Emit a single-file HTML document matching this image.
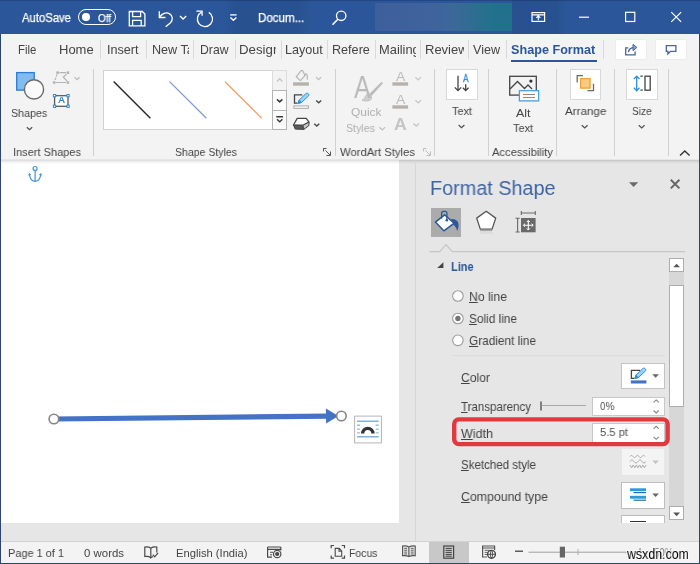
<!DOCTYPE html>
<html lang="en">
<head>
<meta charset="utf-8">
<title>Format Shape - Word</title>
<style>
html,body{margin:0;padding:0;}
body{width:700px;height:564px;position:relative;overflow:hidden;background:#e6e6e6;font-family:"Liberation Sans",sans-serif;}
.a{position:absolute;}
.t{will-change:transform;position:absolute;white-space:nowrap;line-height:1;transform-origin:0 50%;}
.t u{text-decoration:underline;text-underline-offset:.5px;}
svg{position:absolute;overflow:visible;}
.sep{position:absolute;width:1px;background:#d0d0d0;}
.tab{will-change:transform;position:absolute;top:42.4px;height:17px;overflow:hidden;white-space:nowrap;font-size:13px;line-height:16px;color:#444;}
.tab span{display:inline-block;transform-origin:0 50%;}
.tsep{position:absolute;top:40px;height:19px;width:1px;background:#dadada;}
.btn{position:absolute;background:#fff;border:1px solid #c6c6c6;box-sizing:border-box;}
</style>
</head>
<body>
<!-- title bar -->
<div class="a" style="left:0;top:0;width:700px;height:34.500px;background:#2b579a;"></div>
<div class="a" style="left:222px;top:0;width:90px;height:34.500px;background:linear-gradient(90deg,rgba(0,0,0,0),rgba(0,0,20,.07) 15%,rgba(0,0,20,.07) 85%,rgba(0,0,0,0));"></div>
<div class="a" style="left:512px;top:0;width:56px;height:34.500px;background:linear-gradient(90deg,rgba(0,0,20,.08),rgba(0,0,20,.07) 80%,rgba(0,0,0,0));"></div>
<div class="a" style="left:0;top:0;width:700px;height:1.200px;background:rgba(0,0,30,.18);"></div>
<div class="a" style="left:374.700px;top:2.600px;width:137.500px;height:28.800px;background:linear-gradient(90deg,#3d5f9c 0%,#3f639c 40%,#3c6899 58%,#2b6e90 75%,#22718c 86%,#22718c 100%);"></div>
<!-- tab row + ribbon -->
<div class="a" style="left:0;top:34.400px;width:700px;height:125.100px;background:#f3f3f3;"></div>

<!-- document area -->
<div class="a" style="left:0;top:159.500px;width:398.700px;height:363.900px;background:#fff;"></div>
<div class="a" style="left:0;top:159.500px;width:700px;height:4.500px;background:linear-gradient(rgba(0,0,0,.15),rgba(0,0,0,.05) 50%,rgba(0,0,0,0));"></div>
<!-- pane -->
<div class="a" style="left:415px;top:163px;width:1px;height:378px;background:#d6d6d6;"></div>
<!-- status bar -->
<div class="a" style="left:0;top:540.600px;width:700px;height:23.400px;background:#f3f3f3;border-top:1px solid #d2d2d2;box-sizing:border-box;"></div>
<div class="a" style="left:429.300px;top:541.600px;width:39.700px;height:21.200px;background:#c8c8c8;"></div>
<!-- window borders -->
<div class="a" style="left:0;top:34px;width:1.200px;height:530px;background:#2c4674;"></div>
<div class="a" style="left:698.800px;top:34px;width:1.200px;height:530px;background:#2c4674;"></div>
<div class="a" style="left:0;top:562.600px;width:700px;height:1.400px;background:#2c4674;"></div>
<!-- title bar icons -->
<div class="a" style="left:77.900px;top:8.800px;width:37.800px;height:16px;border:1.300px solid #fff;border-radius:9px;box-sizing:border-box;"></div>
<div class="a" style="left:82px;top:13px;width:7.600px;height:7.600px;border-radius:50%;background:#fff;"></div>
<svg style="left:0;top:0" width="700" height="34" viewBox="0 0 700 34" fill="none" stroke="#fff" stroke-width="1.3">
 <!-- save -->
 <path d="M129.3 11.5h13l2.6 2.6v11.8h-15.6z"/>
 <path d="M132.6 11.5v5.2h8v-5.2M132.6 25.9v-5.6h8.6v5.6"/>
 <!-- undo -->
 <path d="M159.3 11.3v6.2h6.2" />
 <path d="M159.6 17.2c2.3-3.6 6.4-5.4 9.7-3.6c3.6 2 3.9 6.4 1.2 9.2l-4.8 4"/>
 <path d="M180 16l3.1 3l3.1-3" stroke-width="1.4"/>
 <!-- redo -->
 <path d="M196.4 11.2h5.700v4.600"/>
 <path d="M208.800 12.400A7.600 7.600 0 1 1 201.700 12.100"/>
 <!-- qat -->
 <path d="M230.200 14.900h6.400" stroke-width="1.300"/>
 <path d="M230.400 17.600l3 2.700l3-2.700" stroke-width="1.400"/>
 <!-- search -->
 <circle cx="341.200" cy="15.800" r="4.700"/>
 <path d="M337.800 19.300l-5.300 5.400" stroke-width="1.600"/>
 <!-- ribbon display -->
 <rect x="532" y="12.600" width="12.600" height="8.800" stroke-width="1.200"/>
 <path d="M532 14.900h12.600M538.300 20.300v-4M536.300 17.900l2-2l2 2" stroke-width="1.100"/>
 <!-- min max close -->
 <path d="M579 17.200h10" stroke-width="1.200"/>
 <rect x="625.600" y="12.300" width="9.200" height="9.200" stroke-width="1.200"/>
 <path d="M671.300 12.100l9.800 9.800M681.100 12.100l-9.800 9.800" stroke-width="1.200"/>
</svg>
<!-- tab underline -->
<div class="a" style="left:511px;top:59.5px;width:86px;height:2.5px;background:#2b579a;"></div>
<!-- share / comments -->
<div class="btn" style="left:615.400px;top:38.500px;width:31.200px;height:21.800px;border-color:#ececec;border-radius:2px;"></div>
<div class="btn" style="left:655.400px;top:38.500px;width:31.200px;height:21.800px;border-color:#ececec;border-radius:2px;"></div>
<!-- ribbon separators -->
<div class="sep" style="left:93px;top:69px;height:87px;"></div>
<div class="sep" style="left:335px;top:69px;height:87px;"></div>
<div class="sep" style="left:434px;top:69px;height:87px;"></div>
<div class="sep" style="left:488px;top:69px;height:87px;"></div>
<div class="sep" style="left:556px;top:69px;height:87px;"></div>
<div class="sep" style="left:614px;top:69px;height:87px;"></div>
<div class="sep" style="left:668px;top:69px;height:87px;"></div>
<!-- gallery -->
<div class="btn" style="left:103px;top:70px;width:184px;height:60px;border-color:#d2d2d2;"></div>
<div class="a" style="left:272px;top:70px;width:15px;height:21px;background:#f3f3f3;border:1px solid #dcdcdc;box-sizing:border-box;"></div>
<div class="a" style="left:272px;top:90px;width:15px;height:21px;background:#fdfdfd;border:1px solid #b5b5b5;box-sizing:border-box;"></div>
<div class="a" style="left:272px;top:110px;width:15px;height:20px;background:#fdfdfd;border:1px solid #b5b5b5;box-sizing:border-box;"></div>
<!-- big buttons -->
<div class="btn" style="left:446px;top:69px;width:32px;height:30.5px;border-color:#d8d8d8;"></div>
<div class="btn" style="left:570px;top:69px;width:30.5px;height:30.5px;border-color:#d8d8d8;"></div>
<div class="btn" style="left:626px;top:69px;width:32px;height:30.5px;border-color:#d8d8d8;"></div>
<!-- ribbon icons -->
<svg style="left:0;top:0" width="700" height="162" viewBox="0 0 700 162" fill="none" stroke-linecap="butt">
 <!-- shapes -->
 <rect x="16.700" y="72.600" width="17.500" height="17.500" fill="#83bbee" stroke="#2b7cd3" stroke-width="1.300"/>
 <circle cx="34" cy="89.400" r="9.600" fill="#fafafa" stroke="#6a6a6a" stroke-width="1.400"/>
 <path d="M26.800 127.200l2.700 2.500l2.700-2.500" stroke="#505050" stroke-width="1.250"/>
 <!-- edit shape (disabled) -->
 <g stroke="#b4b4b4" stroke-width="1.200">
  <path d="M59.500 72.700h6.500M56 82.500h10"/>
  <path d="M57 74.500l-2.300 6.500" stroke-dasharray="2.200 1.300"/>
  <path d="M66.500 74.300l-3.200 2.700l3.600 4"/>
  <g fill="#b4b4b4" stroke="none"><rect x="56.300" y="71.400" width="2.600" height="2.600"/><rect x="66.600" y="71.400" width="2.600" height="2.600"/><rect x="52.900" y="81.200" width="2.600" height="2.600"/><rect x="66.600" y="81.200" width="2.600" height="2.600"/></g>
  <path d="M74.600 77.300l2.500 2.400l2.500-2.400" stroke="#bcbcbc" stroke-width="1.300"/>
 </g>
 <!-- text box icon -->
 <rect x="54.600" y="95.700" width="13.400" height="10.600" fill="#fff" stroke="#5a5a5a" stroke-width="1.300"/>
 <g fill="#fff" stroke="#2a8dd4" stroke-width="1"><rect x="53.400" y="94.500" width="2.300" height="2.300"/><rect x="66.900" y="94.500" width="2.300" height="2.300"/><rect x="53.400" y="105.100" width="2.300" height="2.300"/><rect x="66.900" y="105.100" width="2.300" height="2.300"/></g>
 <!-- gallery lines -->
 <path d="M113.600 81.600l36.800 36.700" stroke="#262626" stroke-width="1.400"/>
 <path d="M169.600 81.600l36.800 36.700" stroke="#7f9ad6" stroke-width="1.300"/>
 <path d="M225 81.700l36.800 36.600" stroke="#eda36d" stroke-width="1.300"/>
 <!-- gallery chevrons -->
 <path d="M277 81.400l2.700-2.600l2.700 2.600" stroke="#c6c6c6" stroke-width="1.400"/>
 <path d="M277 99.400l2.700 2.500l2.700-2.500" stroke="#3a3a3a" stroke-width="1.500"/>
 <path d="M276.300 116.700h6.800M277 119.200l2.700 2.500l2.700-2.500" stroke="#3a3a3a" stroke-width="1.400"/>
 <!-- shape fill (disabled) -->
 <g stroke="#b6b6b6" stroke-width="1.200" stroke-linejoin="round">
  <path d="M301 70.600l-4.800 6.200l4.200 3.800l4.600-5l-2.400-5z"/>
  <path d="M304.400 76c.4-2.600 2.400-3 2.800-.6l.2 4.200"/>
 </g>
 <rect x="293.100" y="82.300" width="15.800" height="3.400" fill="#b5b1ad"/>
 <path d="M316.100 77.300l2.500 2.300l2.500-2.300" stroke="#c2c2c2" stroke-width="1.300"/>
 <!-- shape outline -->
 <path d="M302.400 94.800h-7.900v8.300h3" stroke="#444" stroke-width="1.300"/>
 <path d="M298 103.500l1.200-3.500l6.600-6.300c.8-.7 1.800-.7 2.500 0c.7 .7 .7 1.700 0 2.500l-6.700 6.200z" fill="#9ad4f6" stroke="#2f8fda" stroke-width="1"/>
 <path d="M298 103.500l1.200-3.500l2.400 2.400z" fill="#2f8fda" stroke="#2f8fda" stroke-width=".8"/>
 <rect x="293.900" y="105.900" width="14.500" height="2.400" fill="#fff" stroke="#a8a8a8" stroke-width="1"/>
 <path d="M316.200 100.400l2.500 2.400l2.500-2.400" stroke="#4a4a4a" stroke-width="1.400"/>
 <!-- shape effects -->
 <path d="M293.500 125l3.700-6.600h9l2.800 3.700l-6.100 3.200z" fill="#fdfdfd" stroke="#444" stroke-width="1.200" stroke-linejoin="round"/>
 <path d="M293.500 125l9.400 .300l.900 4.100l-8.600-.300z" fill="#5a5a5a" stroke="#444" stroke-width="1" stroke-linejoin="round"/>
 <path d="M302.900 125.300l6.100-3.200l-.100 3.500l-5.100 3.800z" fill="#c4c4c4" stroke="#444" stroke-width="1" stroke-linejoin="round"/>
 <path d="M314.300 123.700l2.500 2.400l2.500-2.400" stroke="#4a4a4a" stroke-width="1.400"/>
 <!-- dialog launchers -->
 <path d="M324 149v-1h0M323.500 148.500h3M323.500 148.500v3M325.500 150.500l4.500 4.500M330.500 151.500v4h-4" stroke="#555" stroke-width="1"/>
 <path d="M423.500 148.500h3M423.500 148.500v3M425.500 150.500l4.500 4.500M430.500 151.500v4h-4" stroke="#bdbdbd" stroke-width="1"/>
 <!-- quick styles -->
 <path d="M382.300 82.300c.6 .5 .4 1.300-.2 2l-10.600 11.700l-2.300-2.100l11.400-11.200c.6-.6 1.200-.8 1.700-.4z" fill="#bcbcbc"/>
 <path d="M369 94.300l2.300 2.100c.8 1.800-.2 3.500-2 4.100c-2.500 .9-5.300 .5-7.300-.3c2-.8 2.600-2.200 3.300-3.700c.8-1.700 2.300-2.600 3.700-2.200z" fill="#cfcfcf" stroke="#b8b8b8" stroke-width=".8"/>
 <path d="M379.400 127.300l2.800 2.600l2.800-2.600" stroke="#c0c0c0" stroke-width="1.300"/>
 <!-- wordart small bars & chevrons -->
 <rect x="392.400" y="82.300" width="15.700" height="3.400" fill="#b5b1ad"/>
 <rect x="392.400" y="105.300" width="15.700" height="3.400" fill="#b5b1ad"/>
 <path d="M415.400 77.300l2.800 2.600l2.800-2.600M415.400 100.300l2.800 2.600l2.800-2.600M413.400 123.500l2.800 2.600l2.800-2.600" stroke="#c6c6c6" stroke-width="1.300"/>
 <!-- text direction -->
 <path d="M458 75.700v14.500M454.800 87.400l3.200 3.200l3.200-3.200" stroke="#444" stroke-width="1.300"/>
 <path d="M465.700 84.200v6M462.900 87.800l2.800 2.800l2.800-2.800" stroke="#444" stroke-width="1.300"/>
 <path d="M458.600 125l2.900 2.700l2.900-2.700" stroke="#505050" stroke-width="1.250"/>
 <!-- alt text -->
 <rect x="509.700" y="76.300" width="26.600" height="18.800" stroke="#444" stroke-width="1.300"/>
 <path d="M510 89l7.500-7.500l7 7l3.500-3.500l4 4" stroke="#444" stroke-width="1.300"/>
 <circle cx="530.900" cy="81.100" r="1.600" fill="#333"/>
 <rect x="519.400" y="90.700" width="19.200" height="10.200" fill="#fff" stroke="#4a9fe0" stroke-width="1.300"/>
 <path d="M523 94.500h12M523 97.500h12" stroke="#8a8a8a" stroke-width="1.100"/>
 <!-- arrange -->
 <path d="M583 75.700h-5.800v6.800M587.500 90.700h6v-7" stroke="#6a6a6a" stroke-width="1.300"/>
 <rect x="580.600" y="78.600" width="9.500" height="9.500" fill="#f9cb80" stroke="#e8a33a" stroke-width="1.300"/>
 <path d="M581.800 125.200l2.900 2.700l2.900-2.700" stroke="#505050" stroke-width="1.250"/>
 <!-- size -->
 <path d="M636.700 76.500v13.800M633.900 79l2.800-2.900l2.800 2.900M633.900 87.800l2.800 2.900l2.800-2.900" stroke="#2f8fda" stroke-width="1.300"/>
 <rect x="645" y="76.200" width="5.200" height="14" stroke="#444" stroke-width="1.300"/>
 <path d="M640.400 76.200h2.400M640.400 90.200h2.400" stroke="#444" stroke-width="1.200"/>
 <path d="M638.800 125.200l2.900 2.700l2.900-2.700" stroke="#505050" stroke-width="1.250"/>
 <!-- collapse ribbon -->
 <path d="M680 155.500l4.800-4.600l4.800 4.600" stroke="#333" stroke-width="1.400"/>
 <!-- share -->
 <path d="M628.300 47.800h-2.600v7h9.400v-3.200" stroke="#4a6599" stroke-width="1.300"/>
 <path d="M628.400 52.200c.4-3 2.600-4.600 6-4.700" stroke="#4a6599" stroke-width="1.300"/>
 <path d="M633 44.300l3.900 3.200l-3.900 3.200z" fill="#8ea3cc" stroke="#4a6599" stroke-width="1"/>
 <!-- comment -->
 <path d="M666.300 45.700h9.600v5.600h-5.400l-2.600 2.700v-2.700h-1.600z" stroke="#4a6599" stroke-width="1.300"/>
</svg>
<!-- pane: icon tabs -->
<div class="a" style="left:431.300px;top:207.700px;width:29.700px;height:29.200px;background:#ababab;"></div>
<svg style="left:0;top:162px" width="700" height="380" viewBox="0 162 700 380" fill="none">
 <!-- pane title controls -->
 <path d="M629 182.300h9.200l-4.600 4.800z" fill="#6a6a6a"/>
 <path d="M670.800 179.800l8.600 8.600M679.400 179.800l-8.600 8.600" stroke="#666" stroke-width="2"/>
 <!-- bucket -->
 <path d="M444.600 214.800l9.400 8.500l-10.200 7.500l-8.400-8.700z" fill="#fff" stroke="#2b579a" stroke-width="1.500" stroke-linejoin="round"/>
 <path d="M441.600 218.500v-5.300c0-1.200 .8-1.900 1.900-1.900h1.500c1.100 0 1.900 .7 1.900 1.900v7" stroke="#2b579a" stroke-width="1.300"/>
 <circle cx="446.800" cy="220.300" r="1.300" fill="#2b579a"/>
 <path d="M451 219.200c3.500-.5 6.800 1.200 7.400 4.200c.5 2.500 -.2 5.500-1.200 7.500c-.6-2.500-1.800-4.800-3.800-6.200l.6-1.600z" fill="#2b579a"/>
 <!-- pentagon -->
 <path d="M486.200 211.300l9.500 6.800l-3.600 11h-11.800l-3.600-11z" fill="#fff" stroke="#555" stroke-width="1.300" stroke-linejoin="round"/>
 <path d="M480.300 230.500h11.800l1 3.500h-13.800z" fill="#dcdcdc"/>
 <path d="M480 230.200h12.400" stroke="#9a9a9a" stroke-width="1.200"/>
 <!-- size & properties -->
 <rect x="521" y="218" width="14.600" height="14.300" fill="#6a6a6a"/>
 <path d="M521 213h14.600M521.300 211v4M535.300 211v4M517.600 218v14.300M515.500 218.300h4.200M515.500 232h4.200" stroke="#6a6a6a" stroke-width="1.100"/>
 <path d="M523.500 225.200h9.600M528.300 220.400v9.600" stroke="#fff" stroke-width="1.100"/>
 <path d="M525 223.700l-1.600 1.500l1.600 1.500M531.600 223.700l1.600 1.500l-1.600 1.500M526.800 222l1.500-1.600l1.500 1.600M526.800 228.400l1.500 1.600l1.500-1.600" stroke="#fff" stroke-width="1"/>
 <!-- separator with notch -->
 <path d="M429.300 251.600h10.400l6.300-7l6.300 7h232.700" stroke="#c6c6c6" stroke-width="1.300"/>
 <!-- section triangle -->
 <path d="M443.400 262.200v5.900h-6.200z" fill="#444"/>
 <!-- radios -->
 <circle cx="457.900" cy="296" r="5.300" fill="#fff" stroke="#9c9c9c" stroke-width="1.100"/>
 <circle cx="457.900" cy="318.500" r="5.300" fill="#fff" stroke="#9c9c9c" stroke-width="1.100"/>
 <circle cx="457.900" cy="318.500" r="2.700" fill="#767676"/>
 <circle cx="457.900" cy="340.300" r="5.300" fill="#fff" stroke="#9c9c9c" stroke-width="1.100"/>
 <!-- faint sub separator -->
 <path d="M452 355.600h213" stroke="#dbdbdb" stroke-width="1"/>
 <!-- transparency slider -->
 <path d="M541 401.500v9" stroke="#666" stroke-width="1.600"/>
 <path d="M541.800 405.500h44.200" stroke="#a8a8a8" stroke-width="1"/>
</svg>
<!-- colour button -->
<div class="btn" style="left:621.400px;top:363px;width:43.200px;height:26.400px;border-color:#c3c3c3;"></div>
<!-- fields -->
<div class="btn" style="left:592px;top:396.500px;width:72.600px;height:19.400px;border-color:#c8c8c8;"></div>
<div class="btn" style="left:592px;top:423px;width:72.600px;height:20px;border-color:#c8c8c8;"></div>
<!-- sketched (disabled) -->
<div class="a" style="left:621.500px;top:449px;width:42.800px;height:26px;background:#f4f4f4;"></div>
<!-- compound -->
<div class="btn" style="left:621.400px;top:482.300px;width:43.200px;height:26.400px;border-color:#bdbdbd;"></div>
<!-- dash type (clipped) -->
<div class="a" style="left:621.400px;top:515px;width:43.200px;height:8px;overflow:hidden;"><div class="btn" style="left:0;top:0;width:43.200px;height:26px;border-color:#bdbdbd;"></div><div class="a" style="left:8.600px;top:5.800px;width:16px;height:1.500px;background:#333;"></div></div>
<!-- pane scrollbar -->
<div class="a" style="left:669.300px;top:258px;width:14.400px;height:262px;background:#d7d7d7;"></div>
<div class="btn" style="left:669.200px;top:258.200px;width:14.600px;height:14.300px;border-color:#adadad;"></div>
<div class="btn" style="left:669.200px;top:285px;width:14.600px;height:121.500px;border-color:#adadad;"></div>
<div class="btn" style="left:669.200px;top:506.200px;width:14.600px;height:14.200px;border-color:#adadad;"></div>
<svg style="left:0;top:162px" width="700" height="380" viewBox="0 162 700 380" fill="none">
 <path d="M673.200 267.300h6.800l-3.400-3.600z" fill="#555"/>
 <path d="M673.200 512.600h6.800l-3.400 3.600z" fill="#555"/>
 <!-- colour icon -->
 <path d="M640 370.300h-8.600v8h3" stroke="#444" stroke-width="1.300"/>
 <path d="M634.800 378.600l1.200-3.500l6.700-6.400c.8-.7 1.800-.7 2.500 0c.7 .7 .7 1.700 0 2.500l-6.800 6.300z" fill="#9ad4f6" stroke="#2f8fda" stroke-width="1"/>
 <path d="M634.800 378.600l1.200-3.500l2.400 2.400z" fill="#2f8fda" stroke="#2f8fda" stroke-width=".8"/>
 <rect x="630.800" y="380.400" width="15.600" height="3.100" fill="#4472c4"/>
 <path d="M652.300 374.200h6.600l-3.300 3.600z" fill="#666"/>
 <!-- spinners -->
 <path d="M653.600 402.400l2.600-2.500l2.600 2.500M653.600 410.500l2.600 2.500l2.600-2.500M653.600 428.800l2.600-2.500l2.600 2.500M653.600 436.800l2.600 2.500l2.600-2.500" stroke="#858585" stroke-width="1.100"/>
 <!-- sketched icon -->
 <path d="M630 456.500c1-1.500 2-1.500 3 0s2 1.500 3 0s2-1.500 3 0s2 1.500 3 0s2-1.500 3 0M630 461.500c1.300-2 2.700-2 4 0s2.700 2 4 0s2.700-2 4 0s2.700 2 4 0M630 465l1.600 2.800l1.600-2.800l1.600 2.800l1.600-2.800l1.600 2.800l1.600-2.800l1.600 2.800l1.600-2.800l1.600 2.800l1.600-2.800" stroke="#ababab" stroke-width="1"/>
 <path d="M652.300 460.500h6.600l-3.300 3.600z" fill="#c4c4c4"/>
 <!-- compound icon -->
 <rect x="630" y="488.300" width="16" height="2.900" fill="#2e9ad9"/>
 <rect x="633.500" y="492" width="12.500" height="1.200" fill="#1f6fa8"/>
 <rect x="630" y="495.800" width="16" height="2.900" fill="#2e9ad9"/>
 <rect x="633.500" y="499.600" width="12.500" height="1.200" fill="#1f6fa8"/>
 <path d="M652.300 493.500h6.600l-3.300 3.600z" fill="#666"/>
 <!-- red highlight -->
 <rect x="454.200" y="419.400" width="213.400" height="24.700" rx="4.600" stroke="#e2393e" stroke-width="4.400"/>
</svg>
<!-- document objects -->
<svg style="left:0;top:162px" width="415" height="380" viewBox="0 162 415 380" fill="none">
 <!-- anchor -->
 <g stroke="#3f93d2" stroke-width="1.200">
  <circle cx="35.100" cy="168.500" r="2"/>
  <path d="M35.100 170.600v10.700"/>
  <path d="M29.500 174c.2 4.200 2.400 7 5.600 7.300c3.200-.3 5.400-3.100 5.600-7.300"/>
  <path d="M28.500 175.400l1-1.900l1.500 1.500M39.200 175l1.500-1.500l1 1.900" stroke-width=".9"/>
 </g>
 <!-- arrow line -->
 <path d="M54 419L328 416.140" stroke="#4472c4" stroke-width="5.200"/>
 <path d="M325.900 408.600l12.600 7.400l-12.400 7.400z" fill="#4472c4"/>
 <circle cx="53.900" cy="419" r="4.800" fill="#fff" stroke="#858585" stroke-width="1.600"/>
 <circle cx="341.400" cy="416" r="4.800" fill="#fff" stroke="#858585" stroke-width="1.600"/>
 <!-- layout options -->
 <rect x="354.600" y="416.100" width="26.800" height="26.800" fill="#fff" stroke="#b9b2b2" stroke-width="1"/>
 <path d="M357 421.200h21.700M357 436.700h21.700" stroke="#7fb4e0" stroke-width="1.500"/>
 <path d="M357 425.300h3M375.700 425.300h3M357 429.100h3M375.700 429.100h3M357 432.900h3M375.700 432.900h3" stroke="#8dbde4" stroke-width="1.400"/>
 <path d="M362.600 433.600a5.200 5.200 0 0 1 10.400 0" stroke="#333" stroke-width="3.400"/>
</svg>
<!-- status bar icons -->
<svg style="left:0;top:541px" width="700" height="23" viewBox="0 541 700 23" fill="none" stroke="#4a4a4a" stroke-width="1.200">
 <!-- proofing book -->
 <path d="M150.800 548.300c-1.600-1.300-4-1.500-6-1.200v9.400c2-.3 4.400-.1 6 1.200"/>
 <path d="M150.800 548.300c1.600-1.300 4-1.500 6-1.200v5.500M150.800 548.300v9.400c.8-.6 1.400-.9 2.200-1.100"/>
 <path d="M152.800 554.600l1.900 2.200l3.400-4"/>
 <!-- macro -->
 <path d="M267.600 547h13.200M267.600 549.400h13.200M267.600 547v10.200h4.400M280.800 547v3.500" />
 <path d="M270 552.300h3M270 554.800h2.200" stroke-width="1"/>
 <circle cx="277.200" cy="554" r="3.700"/>
 <circle cx="277.200" cy="554" r="1.500" fill="#4a4a4a"/>
 <!-- focus -->
 <path d="M331.200 548.200v-2.700h2.800M341.700 545.500h2.800v2.700M344.500 555.500v2.700h-2.800M334 558.200h-2.800v-2.700"/>
 <path d="M335.200 548.400h4l2.500 2.500v5.400h-6.500zM339 548.600v2.600h2.600" stroke-width="1.100"/>
 <!-- read mode -->
 <g stroke="#555" stroke-width="1.200">
 <path d="M408.900 547c-1.800-1-4.200-1.200-6.300-.9v9.600c2.100-.3 4.500-.1 6.300 .9c1.800-1 4.200-1.200 6.300-.9v-9.600c-2.100-.3-4.500-.1-6.300 .9zM408.900 547v9.600"/>
 <path d="M404.200 548.300h3M404.200 550.200h3M404.200 552.100h3M404.200 554h3M410.700 548.300h3M410.700 550.200h3M410.700 552.100h3M410.700 554h3" stroke-width="1"/>
 </g>
 <!-- print layout -->
 <rect x="443.800" y="546" width="9.800" height="12.200" stroke="#444" stroke-width="1.200"/>
 <path d="M445.600 548.400h6.200M445.600 550.400h6.200M445.600 552.400h6.200M445.600 554.400h6.200M445.600 556.200h6.200" stroke="#444" stroke-width="1"/>
 <!-- web layout -->
 <path d="M487 557h-4.400v-11h12v4" stroke="#555"/>
 <path d="M482.600 548h12" stroke="#555" stroke-width="1"/>
 <path d="M484.600 550.300h5M484.600 552.400h3M484.600 554.500h2.500" stroke="#666" stroke-width="1"/>
 <circle cx="491.500" cy="554.300" r="3.900" fill="#f3f3f3" stroke="#444" stroke-width="1.400"/>
 <path d="M487.600 554.300h7.800M491.500 550.400c-1.500 1.200-1.500 6.600 0 7.800c1.500-1.200 1.500-6.600 0-7.800" stroke="#444" stroke-width=".9"/>
 <!-- zoom slider -->
 <path d="M515 551.200h8" stroke="#444" stroke-width="1.300"/>
 <path d="M528.500 552.200h104" stroke="#a0a0a0" stroke-width="1"/>
 <path d="M578 549v6.200" stroke="#b0b0b0" stroke-width="1"/>
 <rect x="559.800" y="546.700" width="5.200" height="10.800" fill="#666" stroke="none"/>
 <path d="M636 552.200h8M640 548.200v8" stroke="#777" stroke-width="1.200"/>
</svg>

<span class="t" style="left:22.0px;top:11.5px;font-size:12px;color:#fff;transform:scaleX(0.941);-webkit-text-stroke:.25px #fff;">AutoSave</span>
<span class="t" style="left:97.5px;top:12.6px;font-size:10.5px;color:#fff;transform:scaleX(0.948);-webkit-text-stroke:.25px #fff;">Off</span>
<span class="t" style="left:258.0px;top:12.4px;font-size:12px;color:#fff;transform:scaleX(0.964);-webkit-text-stroke:.25px #fff;">Docum...</span>
<span class="t" style="left:11.1px;top:107.6px;font-size:11.8px;color:#444;transform:scaleX(0.907);">Shapes</span>
<span class="t" style="left:13.0px;top:146.9px;font-size:11.8px;color:#444;transform:scaleX(0.934);">Insert Shapes</span>
<span class="t" style="left:175.0px;top:146.9px;font-size:11.8px;color:#444;transform:scaleX(0.892);">Shape Styles</span>
<span class="t" style="left:340.0px;top:146.9px;font-size:11.8px;color:#444;transform:scaleX(0.956);">WordArt Styles</span>
<span class="t" style="left:492.0px;top:146.9px;font-size:11.8px;color:#444;transform:scaleX(0.949);">Accessibility</span>
<span class="t" style="left:351.3px;top:107.4px;font-size:11.8px;color:#b0b0b0;transform:scaleX(1.011);">Quick</span>
<span class="t" style="left:346.4px;top:123.1px;font-size:11.8px;color:#b0b0b0;transform:scaleX(0.900);">Styles</span>
<span class="t" style="left:451.7px;top:105.9px;font-size:11.8px;color:#444;transform:scaleX(0.924);">Text</span>
<span class="t" style="left:515.5px;top:107.8px;font-size:11.8px;color:#444;transform:scaleX(1.052);">Alt</span>
<span class="t" style="left:512.5px;top:123.4px;font-size:11.8px;color:#444;transform:scaleX(0.929);">Text</span>
<span class="t" style="left:565.0px;top:105.9px;font-size:11.8px;color:#444;transform:scaleX(0.986);">Arrange</span>
<span class="t" style="left:632.4px;top:105.9px;font-size:11.8px;color:#444;transform:scaleX(0.854);">Size</span>
<span class="t" style="left:430.4px;top:178.1px;font-size:20px;color:#3e64a3;transform:scaleX(0.991);">Format Shape</span>
<span class="t" style="left:451.4px;top:260.6px;font-size:12.5px;color:#2b579a;font-weight:700;transform:scaleX(0.879);">Line</span>
<span class="t" style="left:469.0px;top:290.3px;font-size:13px;color:#444;transform:scaleX(0.939);"><u>N</u>o line</span>
<span class="t" style="left:469.0px;top:312.2px;font-size:13px;color:#444;transform:scaleX(0.910);"><u>S</u>olid line</span>
<span class="t" style="left:469.0px;top:334.3px;font-size:13px;color:#444;transform:scaleX(0.909);"><u>G</u>radient line</span>
<span class="t" style="left:461.0px;top:371.1px;font-size:13px;color:#444;transform:scaleX(0.933);"><u>C</u>olor</span>
<span class="t" style="left:461.0px;top:399.7px;font-size:13px;color:#444;transform:scaleX(0.886);"><u>T</u>ransparency</span>
<span class="t" style="left:461.0px;top:427.0px;font-size:13px;color:#444;transform:scaleX(0.962);"><u>W</u>idth</span>
<span class="t" style="left:461.0px;top:457.5px;font-size:13px;color:#444;transform:scaleX(0.887);"><u>S</u>ketched style</span>
<span class="t" style="left:461.0px;top:490.3px;font-size:13px;color:#444;transform:scaleX(0.948);"><u>C</u>ompound type</span>
<span class="t" style="left:599.8px;top:400.5px;font-size:11.5px;color:#505050;transform:scaleX(0.854);">0%</span>
<span class="t" style="left:599.8px;top:427.2px;font-size:11.5px;color:#505050;transform:scaleX(0.973);">5.5 pt</span>
<span class="t" style="left:8.0px;top:548.2px;font-size:11.2px;color:#444;transform:scaleX(0.978);">Page 1 of 1</span>
<span class="t" style="left:84.0px;top:548.2px;font-size:11.2px;color:#444;transform:scaleX(1.021);">0 words</span>
<span class="t" style="left:176.4px;top:548.2px;font-size:11.2px;color:#444;">English (India)</span>
<span class="t" style="left:348.6px;top:548.2px;font-size:11.2px;color:#444;transform:scaleX(0.935);">Focus</span>
<span class="t" style="left:654.0px;top:547.1px;font-size:12.5px;color:#888;transform:scaleX(0.759);">50%</span>
<span class="t" style="left:627.3px;top:546.8px;font-size:14.6px;color:#000;transform:scaleX(0.848);text-shadow:0 0 1.500px #fff,0 0 1.500px #fff,1px 0 1px #fff,-1px 0 1px #fff,0 1px 1px #fff,0 -1px 1px #fff;">wsxdn.com</span>
<span class="t" style="left:353.5px;top:71.4px;font-size:32px;color:#b9b9b9;transform:scaleX(0.782);">A</span>
<span class="t" style="left:396.3px;top:70.0px;font-size:13.5px;color:#bcbcbc;transform:scaleX(1.032);">A</span>
<span class="t" style="left:396.3px;top:92.5px;font-size:13.5px;color:#bcbcbc;transform:scaleX(1.032);">A</span>
<span class="t" style="left:394.0px;top:115.8px;font-size:17px;color:#c4c4c4;font-weight:700;transform:scaleX(1.042);">A</span>
<span class="t" style="left:463.0px;top:74.4px;font-size:10px;color:#2f8fda;transform:scaleX(0.839);-webkit-text-stroke:.3px #2f8fda;">A</span>
<span class="t" style="left:58.0px;top:96.4px;font-size:8.8px;color:#2a8dd4;font-weight:700;transform:scaleX(1.132);">A</span>
<div class="tab" style="left:17.8px;width:22.2px;"><span style="transform:scaleX(0.87)">File</span></div>
<div class="tab" style="left:59.3px;width:36.7px;"><span style="transform:scaleX(1.0)">Home</span></div>
<div class="tab" style="left:107.3px;width:34.7px;"><span style="transform:scaleX(0.97)">Insert</span></div>
<div class="tab" style="left:151.5px;width:37.1px;"><span style="transform:scaleX(0.97)">New Tab</span></div>
<div class="tab" style="left:199.5px;width:31.5px;"><span style="transform:scaleX(0.94)">Draw</span></div>
<div class="tab" style="left:239.4px;width:37.4px;"><span style="transform:scaleX(1.02)">Design</span></div>
<div class="tab" style="left:285px;width:41.0px;"><span style="transform:scaleX(0.97)">Layout</span></div>
<div class="tab" style="left:332px;width:37.6px;"><span style="transform:scaleX(0.97)">References</span></div>
<div class="tab" style="left:379.4px;width:37.1px;"><span style="transform:scaleX(0.99)">Mailings</span></div>
<div class="tab" style="left:425px;width:38.6px;"><span style="transform:scaleX(1.0)">Review</span></div>
<div class="tab" style="left:473px;width:30.0px;"><span style="transform:scaleX(0.966)">View</span></div>
<div class="tab" style="left:511.4px;width:88.6px;color:#2b579a;font-weight:700;"><span style="transform:scaleX(0.972)">Shape Format</span></div>
<div class="tsep" style="left:99.9px"></div>
<div class="tsep" style="left:145.9px"></div>
<div class="tsep" style="left:192.5px"></div>
<div class="tsep" style="left:234.7px"></div>
<div class="tsep" style="left:280.5px"></div>
<div class="tsep" style="left:327.2px"></div>
<div class="tsep" style="left:374.5px"></div>
<div class="tsep" style="left:420.1px"></div>
<div class="tsep" style="left:467.5px"></div>
<div class="tsep" style="left:506.1px"></div>
<div class="tsep" style="left:602.5px"></div>
</body>
</html>
